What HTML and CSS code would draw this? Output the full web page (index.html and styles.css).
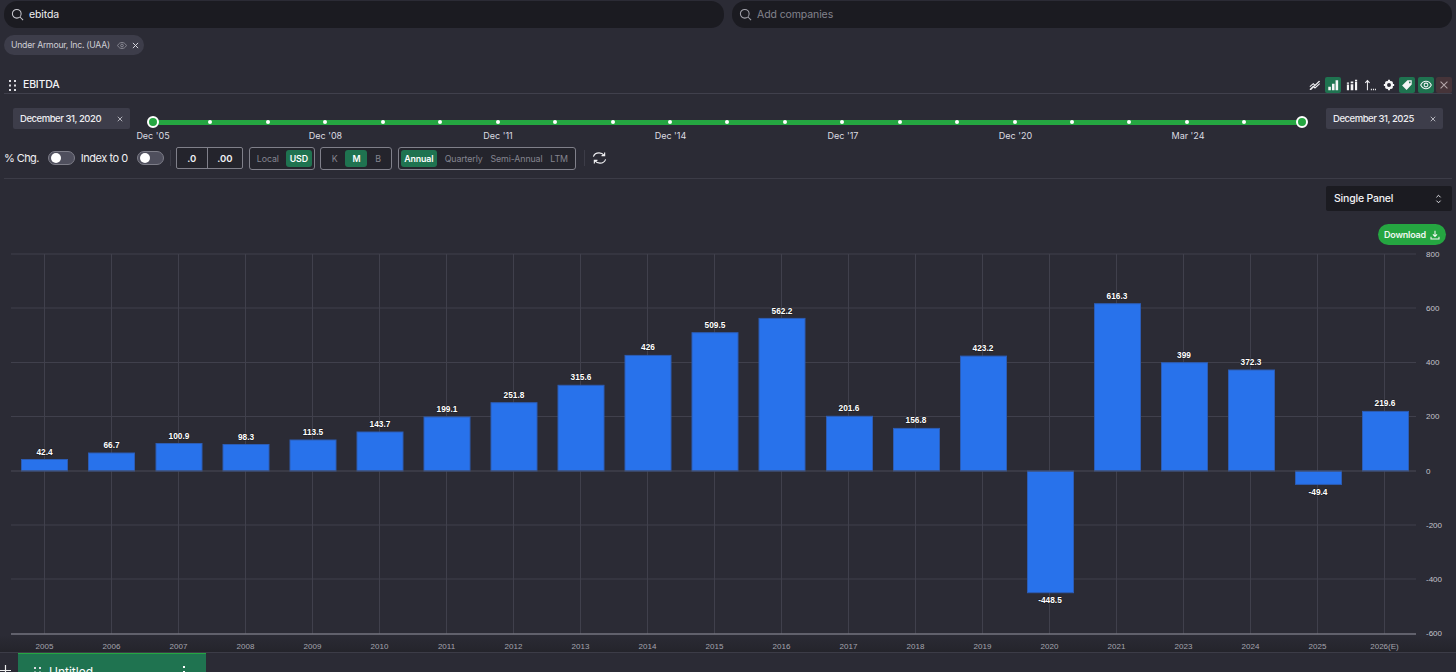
FILE: index.html
```html
<!DOCTYPE html>
<html lang="en">
<head>
<meta charset="utf-8">
<title>EBITDA</title>
<link rel="stylesheet" href="styles.css">
</head>
<body>
<div class="page">
  <header class="searches">
    <div class="search">
      <svg class="search-ico" viewBox="0 0 14 14"><circle cx="6.2" cy="6.2" r="4.7"/><path d="M9.7 9.7 13 13"/></svg>
      <span class="search-val">ebitda</span>
    </div>
    <div class="search">
      <svg class="search-ico dim" viewBox="0 0 14 14"><circle cx="6.2" cy="6.2" r="4.7"/><path d="M9.7 9.7 13 13"/></svg>
      <span class="search-ph">Add companies</span>
    </div>
  </header>

  <div class="chips">
    <div class="chip">
      <span>Under Armour, Inc. (UAA)</span>
      <svg class="chip-eye" viewBox="0 0 12 10"><path d="M.7 5C2 2.6 3.8 1.4 6 1.4S10 2.6 11.3 5C10 7.4 8.200 8.600 6 8.600S2 7.400.7 5Z"/><circle cx="6" cy="5" r="1.600"/></svg>
      <svg class="chip-x" viewBox="0 0 8 8"><path d="M1 1l6 6M7 1 1 7"/></svg>
    </div>
  </div>

  <div class="title-row">
    <svg class="grip" viewBox="0 0 7 11"><g><rect x="0" y="0" width="2" height="2"/><rect x="5" y="0" width="2" height="2"/><rect x="0" y="4.500" width="2" height="2"/><rect x="5" y="4.500" width="2" height="2"/><rect x="0" y="9" width="2" height="2"/><rect x="5" y="9" width="2" height="2"/></g></svg>
    <span class="title">EBITDA</span>
    <div class="tools">
      <span class="tool"><svg viewBox="0 0 14 14"><path class="ln" d="M1 9 5 5.500l2 2L12.500 2.500M1 12.500l4-4 2 2 5.500-5M2 12.500 12 2.500"/></svg></span>
      <span class="tool on"><svg viewBox="0 0 14 14"><path class="fl" d="M1.500 9h3v4h-3zM5.800 5.500h3V13h-3zM10 1.500h3V13h-3z"/></svg></span>
      <span class="tool"><svg viewBox="0 0 14 14"><path class="fl" d="M1 6.500h2.500V13H1zM1 4.200h2.500v1.300H1zM5.500 6h3v7h-3zM5.500 3h3v2h-3zM10.500 3h2.500v10h-2.500zM10.500 1h2.500v1.200h-2.500z"/></svg></span>
      <span class="tool"><svg viewBox="0 0 14 14"><path class="ln" d="M4 13V2M1.500 4.500 4 1.800l2.500 2.700"/><path class="fl" d="M8 11.500h1.200v1.500H8zM10.400 11.500h1.200v1.500h-1.200zM12.700 11.500h1.200v1.500h-1.200z"/></svg></span>
      <span class="tool"><svg viewBox="0 0 14 14"><circle class="gear-ring" cx="7" cy="7" r="3.600"/><path class="fl" d="M5.800 1h2.400v2H5.800zM5.800 11h2.400v2H5.800zM1 5.800h2v2.400H1zM11 5.800h2v2.400h-2zM2.300 3.900l1.600-1.600 1.400 1.400-1.600 1.600zM8.700 10.300l1.600-1.600 1.400 1.400-1.600 1.600zM2.300 10.100l1.400-1.400 1.600 1.600-1.400 1.400zM8.700 3.700l1.400-1.400 1.600 1.600-1.400 1.400z"/></svg></span>
      <span class="tool on"><svg viewBox="0 0 14 14"><path class="fl" fill-rule="evenodd" d="M7.500 1.500H12.500V6.500L6.500 12.700 1.300 7.500ZM10.300 3a1 1 0 1 0 .01 0Z"/></svg></span>
      <span class="tool on"><svg viewBox="0 0 14 14"><path class="ln" d="M.8 7C2.300 4 4.400 2.700 7 2.700S11.700 4 13.200 7C11.700 10 9.600 11.300 7 11.300S2.300 10 .8 7Z"/><circle class="ln" cx="7" cy="7" r="2.200"/></svg></span>
      <span class="tool close"><svg viewBox="0 0 14 14"><path class="ln" d="M3 3l8 8M11 3l-8 8"/></svg></span>
    </div>
  </div>

  <div class="range">
    <div class="date"><span>December 31, 2020</span><svg class="date-x" viewBox="0 0 8 8"><path d="M1 1l6 6M7 1 1 7"/></svg></div>
    <div class="slider">
      <div class="track">
        <i class="knob"></i><i class="dot"></i><i class="dot"></i><i class="dot"></i><i class="dot"></i><i class="dot"></i><i class="dot"></i><i class="dot"></i><i class="dot"></i><i class="dot"></i><i class="dot"></i><i class="dot"></i><i class="dot"></i><i class="dot"></i><i class="dot"></i><i class="dot"></i><i class="dot"></i><i class="dot"></i><i class="dot"></i><i class="dot"></i><i class="knob"></i>
      </div>
      <div class="ticks">
        <span>Dec '05</span><span>Dec '08</span><span>Dec '11</span><span>Dec '14</span><span>Dec '17</span><span>Dec '20</span><span>Mar '24</span>
      </div>
    </div>
    <div class="date"><span>December 31, 2025</span><svg class="date-x" viewBox="0 0 8 8"><path d="M1 1l6 6M7 1 1 7"/></svg></div>
  </div>

  <div class="controls">
    <span class="lbl">% Chg.</span>
    <span class="toggle"><i></i></span>
    <span class="lbl lbl2">Index to 0</span>
    <span class="toggle"><i></i></span>
    <span class="sep"></span>
    <div class="decimals"><span>.0</span><span>.00</span></div>
    <div class="seg seg-cur"><span>Local</span><span class="act">USD</span></div>
    <div class="seg seg-unit"><span>K</span><span class="act">M</span><span>B</span></div>
    <div class="seg seg-per"><span class="act">Annual</span><span>Quarterly</span><span>Semi-Annual</span><span>LTM</span></div>
    <span class="sep sep2"></span>
    <svg class="refresh" viewBox="0 0 16 14"><path d="M1.500 5.500C2.300 3 4.500 1.500 7.500 1.500c2.500 0 4 .8 5.500 2.700M13.500 1.200v3.300h-3.300M14.500 8.500c-.8 2.500-3 4-6 4-2.500 0-4-.8-5.500-2.700M2.500 12.800V9.500h3.300"/></svg>
  </div>

  <div class="panel-row">
    <div class="select">
      <span>Single Panel</span>
      <svg class="updown" viewBox="0 0 8 12"><path d="M1.500 4 4 1.500 6.500 4M1.500 8 4 10.500 6.500 8"/></svg>
    </div>
  </div>

  <div class="download-row">
    <div class="download">
      <span>Download</span>
      <svg viewBox="0 0 12 12"><path d="M6 1v6.500M3.500 5.200 6 7.700l2.500-2.500M1.200 8v2.800h9.600V8"/></svg>
    </div>
  </div>

  <svg class="chart" viewBox="0 250 1456 402" width="1456" height="402">
    <g class="grid">
      <path d="M11 254H1416M11 308H1416M11 362.500H1416M11 416.500H1416M11 525H1416M11 579H1416"/>
      <path d="M44.500 254V634M111.500 254V634M178.500 254V634M245.500 254V634M312.500 254V634M379.500 254V634M446.500 254V634M513.500 254V634M580.500 254V634M647.500 254V634M714.500 254V634M781.500 254V634M848.500 254V634M915.500 254V634M982.500 254V634M1049.500 254V634M1116.500 254V634M1183.500 254V634M1250.500 254V634M1317.500 254V634M1384.500 254V634"/>
    </g>
    <g class="bars">
      <rect x="21.500" y="459.500" width="46" height="11.500"/>
      <rect x="88.500" y="453" width="46" height="18"/>
      <rect x="156" y="443.500" width="46" height="27.500"/>
      <rect x="223" y="444.500" width="46" height="26.500"/>
      <rect x="290" y="440" width="46" height="31"/>
      <rect x="357" y="432" width="46" height="39"/>
      <rect x="424" y="417" width="46" height="54"/>
      <rect x="491" y="402.700" width="46" height="68.300"/>
      <rect x="558" y="385.300" width="46" height="85.700"/>
      <rect x="625" y="355.400" width="46" height="115.600"/>
      <rect x="692" y="332.700" width="46" height="138.300"/>
      <rect x="759" y="318.400" width="46" height="152.600"/>
      <rect x="826.500" y="416.300" width="46" height="54.700"/>
      <rect x="893.500" y="428.400" width="46" height="42.600"/>
      <rect x="960.500" y="356.100" width="46" height="114.900"/>
      <rect x="1027.500" y="471" width="46" height="121.700"/>
      <rect x="1094.500" y="303.700" width="46" height="167.300"/>
      <rect x="1161.500" y="362.700" width="46" height="108.300"/>
      <rect x="1228.500" y="370" width="46" height="101"/>
      <rect x="1295.500" y="471" width="46" height="13.400"/>
      <rect x="1362.500" y="411.400" width="46" height="59.600"/>
    </g>
    <path class="axis-zero" d="M11 471H1416"/>
    <path class="axis-x" d="M11 634H1416"/>
    <g class="vals">
      <text x="44.500" y="455">42.4</text>
      <text x="111.500" y="448">66.7</text>
      <text x="179" y="439">100.9</text>
      <text x="246" y="440">98.3</text>
      <text x="313" y="435">113.5</text>
      <text x="380" y="427">143.7</text>
      <text x="447" y="412">199.1</text>
      <text x="514" y="398">251.8</text>
      <text x="581" y="380">315.6</text>
      <text x="648" y="350">426</text>
      <text x="715" y="328">509.5</text>
      <text x="782" y="314">562.2</text>
      <text x="849" y="411">201.6</text>
      <text x="916" y="423">156.8</text>
      <text x="983" y="351">423.2</text>
      <text x="1050" y="603">-448.5</text>
      <text x="1117" y="299">616.3</text>
      <text x="1184" y="358">399</text>
      <text x="1251" y="365">372.3</text>
      <text x="1318" y="495">-49.4</text>
      <text x="1385" y="406">219.6</text>
    </g>
    <g class="years">
      <text x="44.500" y="649">2005</text>
      <text x="111.500" y="649">2006</text>
      <text x="178.500" y="649">2007</text>
      <text x="245.500" y="649">2008</text>
      <text x="312.500" y="649">2009</text>
      <text x="379.500" y="649">2010</text>
      <text x="446.500" y="649">2011</text>
      <text x="513.500" y="649">2012</text>
      <text x="580.500" y="649">2013</text>
      <text x="647.500" y="649">2014</text>
      <text x="714.500" y="649">2015</text>
      <text x="781.500" y="649">2016</text>
      <text x="848.500" y="649">2017</text>
      <text x="915.500" y="649">2018</text>
      <text x="982.500" y="649">2019</text>
      <text x="1049.500" y="649">2020</text>
      <text x="1116.500" y="649">2021</text>
      <text x="1183.500" y="649">2023</text>
      <text x="1250.500" y="649">2024</text>
      <text x="1317.500" y="649">2025</text>
      <text x="1384.500" y="649">2026(E)</text>
    </g>
    <g class="ylabels">
      <text x="1426" y="257">800</text>
      <text x="1426" y="311">600</text>
      <text x="1426" y="365">400</text>
      <text x="1426" y="419">200</text>
      <text x="1426" y="474">0</text>
      <text x="1426" y="528">-200</text>
      <text x="1426" y="582">-400</text>
      <text x="1426" y="636">-600</text>
    </g>
  </svg>

  <footer class="tabs">
    <svg class="plus" viewBox="0 0 11 11"><path d="M5.500 0v11M0 5.500h11"/></svg>
    <div class="tab">
      <svg class="grip" viewBox="0 0 7 11"><rect x="0" y="0" width="2" height="2"/><rect x="5" y="0" width="2" height="2"/><rect x="0" y="4.500" width="2" height="2"/><rect x="5" y="4.500" width="2" height="2"/><rect x="0" y="9" width="2" height="2"/><rect x="5" y="9" width="2" height="2"/></svg>
      <span>Untitled</span>
      <svg class="kebab" viewBox="0 0 2 12"><rect width="2" height="2"/><rect y="5" width="2" height="2"/><rect y="10" width="2" height="2"/></svg>
    </div>
  </footer>
</div>
</body>
</html>
```
FILE: styles.css
```css
* { box-sizing: border-box; }
html, body { margin: 0; padding: 0; background: #2b2b35; }
body { font-family: Inter, "Liberation Sans", sans-serif; color: #e9e9ee; }
.page { width: 1456px; height: 672px; overflow: hidden; display: flex; flex-direction: column; }

.searches { display: flex; gap: 8px; padding: 1px 4px 0; height: 28px; }
.search { flex: 1; height: 27px; background: #1b1b21; border-radius: 13px; display: flex; align-items: center; padding-left: 7px; gap: 5px; font-size: 10.500px; }
.search-ico { width: 13px; height: 13px; fill: none; stroke: #c9c9d0; stroke-width: 1.100; }
.search-ico.dim { stroke: #a3a3ac; }
.search-val { color: #f0f0f3; letter-spacing: -.1px; }
.search-ph { color: #83838d; letter-spacing: -.1px; }

.chips { display: flex; padding: 7px 4px 0; height: 27px; }
.chip { height: 20px; width: 140px; background: #3d3d4a; border-radius: 10px; display: flex; align-items: center; padding-left: 7px; font-size: 8.700px; letter-spacing: -.25px; color: #cfcfd6; white-space: nowrap; }
.chip-eye { width: 10px; height: 9px; margin-left: 7px; fill: none; stroke: #94949e; stroke-width: 1; flex: none; }
.chip-x { width: 7px; height: 7px; margin-left: 5px; fill: none; stroke: #dcdce2; stroke-width: 1.100; flex: none; }

.title-row { margin: 20px 4px 0; height: 19px; display: flex; align-items: center; border-bottom: 1px solid #40404c; padding: 2px 0 0 5px; }
.grip { width: 7px; height: 11px; fill: #dcdce2; flex: none; }
.title { margin-left: 7px; padding-bottom: 2px; font-size: 10.500px; font-weight: 500; letter-spacing: -.2px; color: #f2f2f5; }
.tools { margin-left: auto; display: flex; align-items: center; gap: 2.500px; }
.tool { width: 16px; height: 16px; border-radius: 2px; display: flex; align-items: center; justify-content: center; }
.tool svg { width: 12px; height: 12px; }
.tool.on { background: #1f7350; }
.tool.close { background: #463439; }
.tool.close .ln { stroke: #b5a7aa; }
.ln { fill: none; stroke: #f1f1f4; stroke-width: 1.200; }
.fl { fill: #f4f4f6; }
.gear-ring { fill: none; stroke: #f4f4f6; stroke-width: 2.600; }

.range { display: flex; align-items: flex-start; padding: 14px 13px 0; height: 53px; }
.date { flex: none; width: 117px; height: 21px; background: #3d3d4a; border-radius: 2px; display: flex; align-items: center; justify-content: space-between; padding: 0 7px; font-size: 9.500px; font-weight: 500; letter-spacing: -.45px; color: #ececf0; }
.date-x { width: 6px; height: 6px; fill: none; stroke: #c9c9d0; stroke-width: 1.100; }
.slider { flex: 1; margin: 0 24px 0 23px; padding-top: 11.500px; min-width: 0; }
.track { height: 5px; background: #25a641; display: flex; justify-content: space-between; align-items: center; }
.dot { width: 4px; height: 4px; margin: 0 -2px; background: #fff; border-radius: 50%; flex: none; }
.knob { width: 12px; height: 12px; margin: 0 -6px; background: #25a641; border: 2.500px solid #fff; border-radius: 50%; position: relative; z-index: 1; flex: none; }
.ticks { display: flex; justify-content: space-between; margin: 5px 114px 0 0; height: 12px; }
.ticks span { width: 0; display: flex; justify-content: center; white-space: nowrap; font-size: 9px; color: #dcdce2; }

.controls { margin: 0 4px; height: 32px; display: flex; align-items: flex-start; border-bottom: 1px solid #3c3c47; font-size: 9.500px; }
.lbl { font-size: 11px; letter-spacing: -.6px; color: #f0f0f3; line-height: 22px; height: 23px; }
.lbl2 { margin-left: 6px; letter-spacing: -.45px; }
.toggle { width: 27px; height: 14px; margin: 4px 0 0 9px; background: #4f4f5d; border: 1px solid #7d7d88; border-radius: 7px; padding: 1px 0 0 2px; flex: none; }
.toggle i { display: block; width: 10px; height: 10px; background: #fff; border-radius: 50%; }
.sep { width: 1px; height: 16px; margin: 3px 5px 0 6px; background: #3c3c47; flex: none; }
.decimals { display: flex; width: 67px; height: 22px; border: 1px solid #80808a; border-radius: 2px; background: #24242c; font-weight: 600; color: #f1f1f4; }
.decimals span { display: flex; align-items: center; justify-content: center; width: 30px; }
.decimals span + span { flex: 1; border-left: 1px solid #80808a; }
.seg { display: flex; align-items: center; height: 23px; margin-left: 6px; border: 1px solid #80808a; border-radius: 3px; background: #24242c; padding: 0 2px; color: #858590; font-size: 8.800px; letter-spacing: -.1px; justify-content: space-between; }
.seg span { display: flex; align-items: center; justify-content: center; height: 17px; }
.seg .act { background: #1f7350; color: #fff; border-radius: 3px; font-weight: 600; }
.seg-cur { width: 66px; padding-left: 7px; }
.seg-cur .act { width: 26px; }
.seg-unit { width: 72px; margin-left: 5px; padding: 0 10px 0 11px; }
.seg-unit .act { width: 22px; }
.seg-per { width: 178px; padding-right: 7px; }
.seg-per .act { width: 36px; }
.sep2 { margin-left: 8px; margin-right: 7px; }
.refresh { width: 15px; height: 14px; margin-top: 4px; fill: none; stroke: #f1f1f4; stroke-width: 1.200; }

.panel-row { display: flex; justify-content: flex-end; padding: 7px 4px 0 0; height: 45px; }
.select { width: 126px; height: 25px; background: #1b1b21; border-radius: 2px; display: flex; align-items: center; justify-content: space-between; padding: 0 10px 0 8px; font-size: 10.500px; font-weight: 500; color: #f2f2f5; letter-spacing: -.2px; }
.updown { width: 7px; height: 10px; fill: none; stroke: #e3e3e8; stroke-width: 1.200; }

.download-row { display: flex; justify-content: flex-end; padding: 0 10px 0 0; height: 26px; }
.download { width: 68px; height: 21px; background: #25a641; border-radius: 11px; display: flex; align-items: center; justify-content: center; gap: 4px; font-size: 9px; font-weight: 600; letter-spacing: -.2px; color: #eef7f0; }
.download svg { width: 10px; height: 10px; fill: none; stroke: #f2f8f3; stroke-width: 1.300; }

.chart { display: block; flex: none; font-family: "Liberation Sans", Arial, sans-serif; background: linear-gradient(to bottom, #2b2b35 0, #2b2b35 385px, #24242b 402px); }
.grid path { fill: none; stroke: #40404c; stroke-width: 1; }
.bars rect { fill: #2872eb; stroke: #2c5cb4; stroke-width: 1; }
.axis-zero { stroke: #4a4a56; stroke-width: 1; fill: none; }
.axis-x { stroke: #74747f; stroke-width: 1.500; fill: none; }
.vals text { fill: #fff; font-size: 8.300px; font-weight: 700; text-anchor: middle; paint-order: stroke; stroke: #1b1b21; stroke-width: 1.200px; }
.years text { fill: #a4a4ad; font-size: 8px; text-anchor: middle; }
.ylabels text { fill: #c4c4cc; font-size: 8px; }

.tabs { height: 20px; flex: none; display: flex; border-top: 1px solid #3c3c47; background: #2b2b35; }
.plus { width: 11px; height: 11px; margin: 12px 0 0 0; stroke: #eee; stroke-width: 1.200; flex: none; }
.tab { width: 188px; height: 30px; margin-left: 7px; background: #1f7350; border-top: 1px solid #25a641; display: flex; align-items: flex-start; padding: 11px 21px 0 16px; font-size: 12px; color: #fff; }
.tab .grip { margin-top: 2px; }
.tab span { margin-left: 8px; line-height: 14px; }
.kebab { width: 2px; height: 12px; margin-left: auto; margin-top: 1px; fill: #fff; }
```
